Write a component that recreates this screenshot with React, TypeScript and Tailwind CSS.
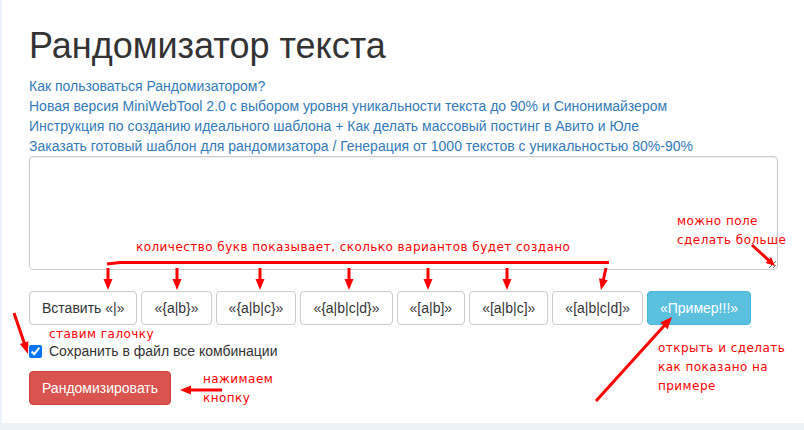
const links = [
  "Как пользоваться Рандомизатором?",
  "Новая версия MiniWebTool 2.0 с выбором уровня уникальности текста до 90% и Синонимайзером",
  "Инструкция по созданию идеального шаблона + Как делать массовый постинг в Авито и Юле",
  "Заказать готовый шаблон для рандомизатора / Генерация от 1000 текстов с уникальностью 80%-90%",
];

const buttons = ["Вставить «|»", "«{a|b}»", "«{a|b|c}»", "«{a|b|c|d}»", "«[a|b]»", "«[a|b|c]»", "«[a|b|c|d]»"];

// red arrow drawn from (x1,y1) to the tip (x2,y2)
function Arrow({ x1, y1, x2, y2, head = 11, w = 9 }: { x1: number; y1: number; x2: number; y2: number; head?: number; w?: number }) {
  const dx = x2 - x1;
  const dy = y2 - y1;
  const len = Math.hypot(dx, dy);
  const ux = dx / len;
  const uy = dy / len;
  const bx = x2 - ux * head;
  const by = y2 - uy * head;
  const px = -uy * (w / 2);
  const py = ux * (w / 2);
  return (
    <g>
      <line x1={x1} y1={y1} x2={bx + ux * 2} y2={by + uy * 2} stroke="#ff0000" strokeWidth={3} />
      <polygon points={`${x2},${y2} ${bx + px},${by + py} ${bx - px},${by - py}`} fill="#ff0000" />
    </g>
  );
}

function Note({ className, children }: { className: string; children: React.ReactNode }) {
  return (
    <div className={`absolute text-[#ff0000] text-[12px] leading-[19px] tracking-[0.45px] font-['DejaVu_Sans',sans-serif] whitespace-nowrap ${className}`}>
      {children}
    </div>
  );
}

export default function App() {
  return (
    <div className="relative w-[804px] h-[430px] overflow-hidden bg-[#edf2f8] pl-[2px] font-['Liberation_Sans',Arial,sans-serif]">
      <div className="h-[423px] bg-white pl-[27px] pt-[26px]">
        <h1 className="text-[36px] leading-[1.1] text-[#333]">Рандомизатор текста</h1>

        <div className="mt-[10px]">
          {links.map((l) => (
            <a key={l} href="#" className="block text-[14px] leading-[20px] text-[#337ab7]">
              {l}
            </a>
          ))}
        </div>

        <textarea className="block w-[749px] h-[114px] border border-[#ccc] rounded-[4px] shadow-[inset_0_1px_1px_rgba(0,0,0,0.075)] px-3 py-1.5 text-[14px] outline-none" />

        <div className="flex gap-[4px] mt-[21px]">
          {buttons.map((b) => (
            <button
              key={b}
              className="h-[34px] px-[12px] border border-[#ccc] rounded-[4px] bg-white text-[14px] leading-[20px] text-[#333]"
            >
              {b}
            </button>
          ))}
          <button className="h-[34px] px-[12px] border border-[#46b8da] rounded-[4px] bg-[#5bc0de] text-[14px] leading-[20px] text-white">
            «Пример!!!»
          </button>
        </div>

        <label className="flex items-center gap-[7px] mt-[17px] h-[20px] text-[14px] text-[#333]">
          <input type="checkbox" defaultChecked className="w-[13px] h-[13px] m-0" />
          Сохранить в файл все комбинации
        </label>

        <button className="mt-[9px] h-[34px] px-[12px] border border-[#d43f3a] rounded-[4px] bg-[#d9534f] text-[14px] leading-[20px] text-white">
          Рандомизировать
        </button>
      </div>

      {/* annotations on top of the screenshot */}
      <svg className="absolute inset-0 pointer-events-none" width={804} height={430}>
        <path d="M107 264 L120 262.5 L609 262.5" stroke="#ff0000" strokeWidth={3} fill="none" />
        <Arrow x1={108} y1={268} x2={108} y2={290} />
        <Arrow x1={177} y1={268} x2={177} y2={290} />
        <Arrow x1={260} y1={268} x2={260} y2={290} />
        <Arrow x1={349} y1={268} x2={349} y2={290} />
        <Arrow x1={428} y1={268} x2={428} y2={290} />
        <Arrow x1={507} y1={268} x2={507} y2={290} />
        <Arrow x1={606} y1={268} x2={601} y2={290} />
        <Arrow x1={752} y1={245} x2={775} y2={266} head={9} w={8} />
        <Arrow x1={596} y1={401} x2={672} y2={317} head={12} w={10} />
        <Arrow x1={222} y1={390} x2={180} y2={390} head={11} w={9} />
        <Arrow x1={14} y1={313} x2={28} y2={354} head={12} w={9} />
      </svg>
      <Note className="left-[136px] top-[238px]">количество букв показывает, сколько вариантов будет создано</Note>
      <Note className="left-[677px] top-[212px]">
        можно поле
        <br />
        сделать больше
      </Note>
      <Note className="left-[49px] top-[325px]">ставим галочку</Note>
      <Note className="left-[203px] top-[370px]">
        нажимаем
        <br />
        кнопку
      </Note>
      <Note className="left-[658px] top-[339px]">
        открыть и сделать
        <br />
        как показано на
        <br />
        примере
      </Note>
    </div>
  );
}
